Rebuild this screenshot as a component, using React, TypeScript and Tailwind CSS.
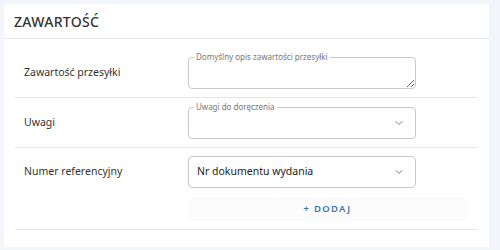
import { ChevronDown } from "lucide-react";

function OutlinedField({
  legend,
  children,
  className = "",
}: {
  legend?: string;
  children: React.ReactNode;
  className?: string;
}) {
  return (
    <div className={`relative w-[228px] h-[32px] rounded-[4px] border border-[#c8c8c8] bg-white ${className}`}>
      {legend && (
        <span className="absolute left-[5px] -top-[6px] bg-white px-[2px] text-[8px] leading-[10px] text-[#777]">
          {legend}
        </span>
      )}
      {children}
    </div>
  );
}

export default function App() {
  return (
    <div
      className="w-[500px] h-[250px] bg-[#f2f5f9] pt-[4px] pl-[4px] text-[#333]"
      style={{ fontFamily: '"Noto Sans", "Open Sans", sans-serif' }}
    >
      <div className="w-[485px] h-[243px] bg-white flex flex-col">
        {/* Nagłówek */}
        <div className="h-[35px] flex items-center px-[10px] border-b border-[#e6e6e6]">
          <h2 className="text-[14px] font-medium tracking-[0.3px] text-[#333]">ZAWARTOŚĆ</h2>
        </div>

        <div className="px-[11px]">
          {/* Zawartość przesyłki */}
          <div className="flex items-center pt-[18px] pb-[8px] border-b border-[#e6e6e6]">
            <div className="w-[173px] pl-[9px] text-[10.5px]">Zawartość przesyłki</div>
            <OutlinedField legend="Domyślny opis zawartości przesyłki">
              <textarea className="w-full h-full resize-y bg-transparent outline-none px-[8px] pt-[6px] text-[11px] block rounded-[4px]" />
            </OutlinedField>
          </div>

          {/* Uwagi */}
          <div className="flex items-center pt-[9px] pb-[8px] border-b border-[#e6e6e6]">
            <div className="w-[173px] pl-[9px] text-[10.5px]">Uwagi</div>
            <OutlinedField legend="Uwagi do doręczenia" className="flex items-center justify-end pr-[10px]">
              <ChevronDown size={12} strokeWidth={1.75} className="text-[#666]" />
            </OutlinedField>
          </div>

          {/* Numer referencyjny */}
          <div className="pt-[8px] pb-[8px] border-b border-[#e6e6e6]">
            <div className="flex items-center">
              <div className="w-[173px] pl-[9px] text-[10.5px]">Numer referencyjny</div>
              <OutlinedField className="flex items-center justify-between pl-[8px] pr-[10px]">
                <span className="text-[10.5px] text-[#222]">Nr dokumentu wydania</span>
                <ChevronDown size={12} strokeWidth={1.75} className="text-[#666]" />
              </OutlinedField>
            </div>
            <div className="flex mt-[9px]">
              <div className="w-[173px]" />
              <button className="w-[279px] h-[24px] bg-[#fbfbfb] rounded-[4px] text-[9.5px] font-semibold tracking-[1.3px] text-[#3f76ab]">
                + DODAJ
              </button>
            </div>
          </div>
        </div>
      </div>
    </div>
  );
}
